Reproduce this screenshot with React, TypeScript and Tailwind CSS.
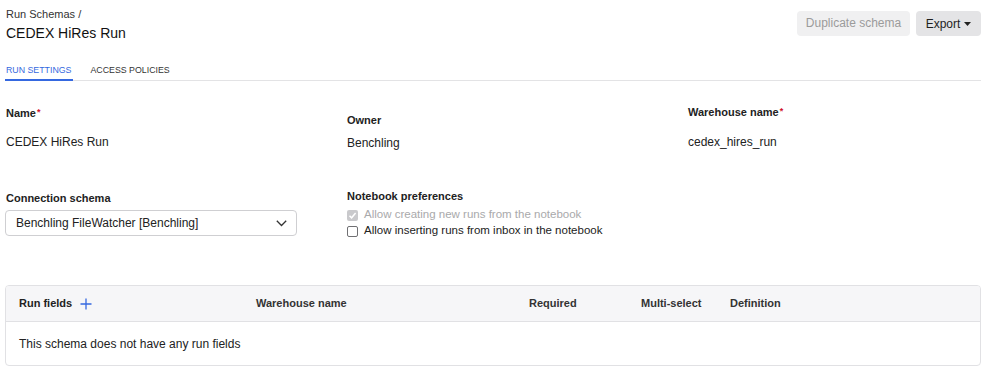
import React from "react";

function Req() {
  return <span className="text-[#d0112b] text-[9px] align-top relative top-[-1px] ml-[1px]">*</span>;
}

export default function App() {
  return (
    <div className="w-[987px] h-[377px] bg-white font-['Liberation_Sans',Arial,sans-serif] text-[#222] px-[5px] pr-[6px] overflow-hidden">
      {/* Header */}
      <div className="flex justify-between items-start pt-[8px]">
        <div className="pl-[1px]">
          <div className="text-[11px] leading-[13px] text-[#333]">Run Schemas /</div>
          <div className="text-[14px] leading-[18px] mt-[3px] text-[#111]">CEDEX HiRes Run</div>
        </div>
        <div className="flex gap-[6px] pt-[3px]">
          <button className="h-[25px] w-[113px] rounded-[4px] bg-[#f0f0f1] text-[#9b9b9b] text-[12px] leading-[25px]">
            Duplicate schema
          </button>
          <button className="h-[25px] w-[65px] rounded-[4px] bg-[#e4e4e6] text-[#1f1f1f] text-[12px] flex items-center justify-center gap-[4px]">
            <span>Export</span>
            <svg width="7" height="4" viewBox="0 0 7 4"><path d="M0 0 L7 0 L3.5 4 Z" fill="#222" /></svg>
          </button>
        </div>
      </div>

      {/* Tabs */}
      <div className="flex gap-[18px] mt-[16px] border-b border-[#e3e3e5]">
        <div className="text-[8.8px] leading-[12px] pt-[6px] pb-[3px] text-[#3568e0] border-b-2 border-[#3568e0] -mb-px px-[1px]">
          RUN SETTINGS
        </div>
        <div className="text-[8.8px] leading-[12px] pt-[6px] pb-[3px] text-[#333]">ACCESS POLICIES</div>
      </div>

      {/* Form */}
      <div className="grid grid-cols-[341px_341px_1fr] pl-[1px]">
        <div className="pt-[26px]">
          <div className="text-[11px] leading-[13px] font-bold text-[#222]">Name<Req /></div>
          <div className="text-[12px] leading-[14px] mt-[15px]">CEDEX HiRes Run</div>
        </div>
        <div className="pt-[33px]">
          <div className="text-[11px] leading-[13px] font-bold text-[#222]">Owner</div>
          <div className="text-[12px] leading-[14px] mt-[9px]">Benchling</div>
        </div>
        <div className="pt-[25px]">
          <div className="text-[11px] leading-[13px] font-bold text-[#222]">Warehouse name<Req /></div>
          <div className="text-[12px] leading-[14px] mt-[16px]">cedex_hires_run</div>
        </div>

        <div className="pt-[42px]">
          <div className="text-[11px] leading-[13px] font-bold text-[#222]">Connection schema</div>
          <div className="mt-[5px] -ml-[1px] w-[292px] h-[26px] border border-[#cfcfd2] rounded-[4px] flex items-center justify-between pl-[10px] pr-[9px]">
            <span className="text-[12px] text-[#222]">Benchling FileWatcher [Benchling]</span>
            <svg width="11" height="7" viewBox="0 0 11 7" fill="none"><path d="M0.8 0.8 L5.5 5.5 L10.2 0.8" stroke="#333" strokeWidth="1.3" /></svg>
          </div>
        </div>
        <div className="pt-[40px]">
          <div className="text-[11px] leading-[13px] font-bold text-[#222]">Notebook preferences</div>
          <div className="mt-[4px] flex items-center gap-[6px] h-[16px]">
            <span className="w-[11px] h-[11px] rounded-[2px] bg-[#c9c9cc] flex items-center justify-center">
              <svg width="9" height="9" viewBox="0 0 9 9" fill="none"><path d="M1.5 4.7 L3.6 6.8 L7.6 2" stroke="#fff" strokeWidth="1.5" /></svg>
            </span>
            <span className="text-[11.5px] text-[#a9a9ab]">Allow creating new runs from the notebook</span>
          </div>
          <div className="flex items-center gap-[6px] h-[16px]">
            <span className="w-[11px] h-[11px] rounded-[2px] border border-[#707073] bg-white" />
            <span className="text-[11.5px] text-[#222]">Allow inserting runs from inbox in the notebook</span>
          </div>
        </div>
        <div />
      </div>

      {/* Table */}
      <div className="mt-[46px] border border-[#e1e1e4] rounded-[4px] overflow-hidden">
        <div className="h-[36px] bg-[#f6f6f8] border-b border-[#e1e1e4] grid grid-cols-[237px_273px_112px_89px_1fr] items-center pl-[13px] text-[11px] font-bold text-[#333]">
          <div className="flex items-center gap-[8px] text-[#222]">
            <span>Run fields</span>
            <svg width="12" height="12" viewBox="0 0 12 12" fill="none"><path d="M6 0.5 V11.5 M0.5 6 H11.5" stroke="#3568e0" strokeWidth="1.3" /></svg>
          </div>
          <div>Warehouse name</div>
          <div>Required</div>
          <div>Multi-select</div>
          <div>Definition</div>
        </div>
        <div className="h-[43px] flex items-center pl-[13px] text-[12px] text-[#222]">
          This schema does not have any run fields
        </div>
      </div>
    </div>
  );
}
